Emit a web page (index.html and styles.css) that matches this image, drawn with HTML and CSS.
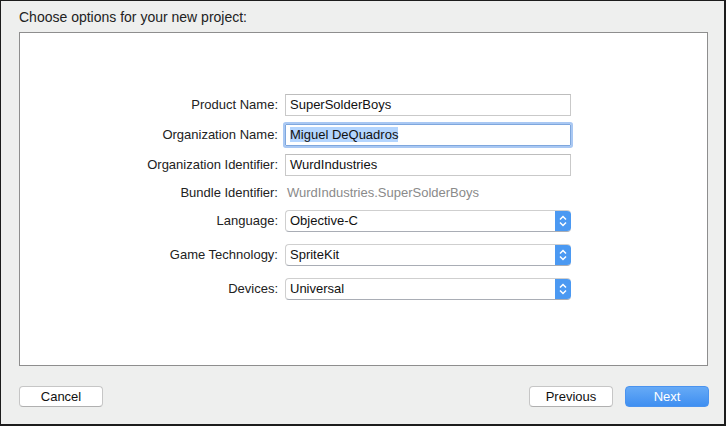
FILE: index.html
```html
<!DOCTYPE html>
<html>
<head>
<meta charset="utf-8">
<link rel="stylesheet" href="styles.css">
</head>
<body>
<div class="window">
  <div class="title">Choose options for your new project:</div>
  <div class="panel">
    <div class="form">
      <label class="lbl">Product Name:</label>
      <div class="field">SuperSolderBoys</div>

      <label class="lbl">Organization Name:</label>
      <div class="field focused"><span class="sel">Miguel DeQuadros</span></div>

      <label class="lbl">Organization Identifier:</label>
      <div class="field">WurdIndustries</div>

      <label class="lbl bundle-lbl">Bundle Identifier:</label>
      <div class="bundle">WurdIndustries.SuperSolderBoys</div>

      <label class="lbl pop-lbl pop-first">Language:</label>
      <div class="popup pop-first"><span class="pop-text">Objective-C</span><span class="stepper"><svg width="16" height="22" viewBox="0 0 16 22"><path d="M5 9.5 L8 6.5 L11 9.5" fill="none" stroke="#fff" stroke-width="1.5"/><path d="M5 12.5 L8 15.5 L11 12.5" fill="none" stroke="#fff" stroke-width="1.5"/></svg></span></div>

      <label class="lbl pop-lbl">Game Technology:</label>
      <div class="popup"><span class="pop-text">SpriteKit</span><span class="stepper"><svg width="16" height="22" viewBox="0 0 16 22"><path d="M5 9.5 L8 6.5 L11 9.5" fill="none" stroke="#fff" stroke-width="1.5"/><path d="M5 12.5 L8 15.5 L11 12.5" fill="none" stroke="#fff" stroke-width="1.5"/></svg></span></div>

      <label class="lbl pop-lbl">Devices:</label>
      <div class="popup"><span class="pop-text">Universal</span><span class="stepper"><svg width="16" height="22" viewBox="0 0 16 22"><path d="M5 9.5 L8 6.5 L11 9.5" fill="none" stroke="#fff" stroke-width="1.5"/><path d="M5 12.5 L8 15.5 L11 12.5" fill="none" stroke="#fff" stroke-width="1.5"/></svg></span></div>
    </div>
  </div>
  <div class="footer">
    <button class="btn">Cancel</button>
    <div class="spacer"></div>
    <button class="btn">Previous</button>
    <button class="btn primary">Next</button>
  </div>
</div>
</body>
</html>
```

FILE: styles.css
```css
* { box-sizing: border-box; }
html, body { margin: 0; padding: 0; }
body {
  font-family: "Liberation Sans", Arial, sans-serif;
  font-size: 13px;
  color: #1a1a1a;
  background: #eeefee;
}
.window {
  width: 726px;
  height: 426px;
  border-style: solid;
  border-color: #1c1c1c;
  border-width: 1px 2px 2px 1px;
  background: #eeefee;
  display: flex;
  flex-direction: column;
}
.title {
  padding: 8px 0 0 18px;
  font-size: 14px;
  line-height: 16px;
  height: 24px;
  color: #222;
}
.panel {
  margin: 7px 16px 0 18px;
  height: 334px;
  background: #fff;
  border: 1px solid #8e8e8e;
  padding-top: 61px;
}
.form {
  display: grid;
  grid-template-columns: 258px 286px;
  column-gap: 7px;
  row-gap: 8px;
  align-items: center;
}
.lbl {
  text-align: right;
  color: #222;
  line-height: 22px;
}
.field {
  height: 22px;
  border: 1px solid #c9c9c9;
  border-top-color: #bdbdbd;
  padding: 0 4px;
  line-height: 20px;
  color: #111;
  white-space: nowrap;
}
.field.focused {
  border-color: #7fa7dd;
  box-shadow: 0 0 0 2px #a9c8f3;
  border-radius: 1px;
}
.sel { background: #b4d5fe; }
.bundle-lbl, .bundle {
  line-height: 20px;
  margin-top: -1px;
}
.bundle {
  color: #8a8a8a;
  padding-left: 2px;
}
.pop-lbl { margin-top: 4px; }
.popup {
  margin-top: 4px;
  height: 22px;
  display: flex;
  border: 1px solid #cfcfcf;
  border-bottom-color: #a9adb5;
  border-right: none;
  border-radius: 4px;
  background: #fff;
  overflow: hidden;
}
.pop-lbl.pop-first, .popup.pop-first { margin-top: -1px; }
.pop-text {
  flex: 1;
  padding-left: 4px;
  line-height: 20px;
  color: #111;
}
.stepper {
  width: 16px;
  margin: -1px 0;
  background: #4b99f2;
  border-radius: 0 4px 4px 0;
  display: flex;
}
.footer {
  display: flex;
  align-items: center;
  padding: 20px 15px 0 18px;
  gap: 12px;
}
.spacer { flex: 1; }
.btn {
  width: 84px;
  height: 21px;
  font-family: "Liberation Sans", Arial, sans-serif;
  font-size: 13px;
  color: #111;
  background: #fff;
  border: 1px solid #c6c6c6;
  border-bottom-color: #b0b0b0;
  border-radius: 4px;
  padding: 0;
  line-height: 19px;
}
.btn.primary {
  background: linear-gradient(#66aaf6, #3f8ff1);
  border-color: #4a93ef;
  color: #fff;
}
```
